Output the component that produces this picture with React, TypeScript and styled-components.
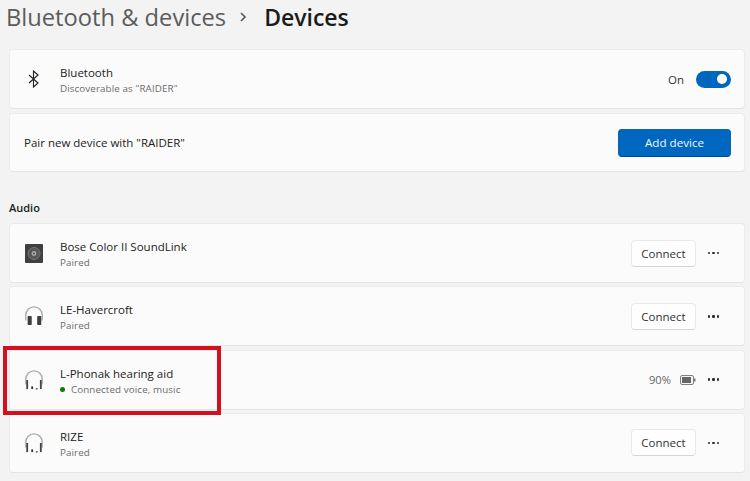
import React from "react";
import styled, { createGlobalStyle } from "styled-components";

const Global = createGlobalStyle`
  html, body { margin: 0; padding: 0; background: #f3f3f3; }
  body { width: 750px; height: 481px; overflow: hidden; font-family: "Open Sans", "Noto Sans", "Liberation Sans", sans-serif; }
`;

const Page = styled.div`
  position: relative;
  width: 750px;
  height: 481px;
  box-sizing: border-box;
  padding: 0 5px 0 9px;
  background: #f3f3f3;
  overflow: hidden;
`;

const Breadcrumb = styled.h1`
  display: flex;
  align-items: center;
  height: 34px;
  margin: 0 0 15px -3px;
  font-size: 23.7px;
  font-weight: 600;
  white-space: nowrap;
`;

const Parent = styled.span`
  color: #5c5c5c;
  font-weight: 500;
`;

const Chevron = styled.svg`
  width: 10px;
  height: 10px;
  margin: 0 16px 0 12px;
  fill: none;
  stroke: #555;
  stroke-width: 1.6;
`;

const Current = styled.span`
  color: #1b1b1b;
  font-size: 23px;
`;

const CardStack = styled.div`
  display: flex;
  flex-direction: column;
  gap: ${(p) => p.$gap}px;
`;

const Card = styled.div`
  display: flex;
  align-items: center;
  height: ${(p) => p.$h ?? 60}px;
  box-sizing: border-box;
  padding: 0 13px 0 15px;
  background: #fbfbfb;
  border: 1px solid #ebebeb;
  border-bottom-color: #e3e3e3;
  border-radius: 4px;
`;

const IconSlot = styled.div`
  display: flex;
  align-items: center;
  justify-content: center;
  width: 20px;
  margin-left: -1px;
  margin-right: 16px;
  flex: none;
`;

const Info = styled.div`
  display: flex;
  flex-direction: column;
  flex: 1;
  min-width: 0;
  padding-top: 3px;
`;

const Title = styled.div`
  font-size: 11.5px;
  line-height: 16px;
  color: #222;
`;

const Sub = styled.div`
  display: flex;
  align-items: center;
  font-size: 9.8px;
  line-height: 15px;
  color: #6b6b6b;
  letter-spacing: 0.1px;
`;

const Dot = styled.span`
  width: 5px;
  height: 5px;
  margin-right: 6px;
  border-radius: 50%;
  background: #0f7b0f;
`;

const PlainLabel = styled.div`
  flex: 1;
  margin-left: -1px;
  font-size: 11.5px;
  color: #222;
`;

const SwitchLabel = styled.span`
  margin-right: 12px;
  font-size: 11.5px;
  color: #333;
`;

const Switch = styled.div`
  display: flex;
  align-items: center;
  justify-content: flex-end;
  width: 35px;
  height: 17px;
  box-sizing: border-box;
  padding-right: 4px;
  border-radius: 9px;
  background: #0067c0;
`;

const Knob = styled.div`
  width: 10px;
  height: 10px;
  border-radius: 50%;
  background: #fff;
`;

const PrimaryButton = styled.button`
  width: 113px;
  height: 28px;
  padding: 0;
  border: 1px solid #0a62b0;
  border-bottom-color: #00498c;
  border-radius: 4px;
  background: #0067c0;
  color: #f2f8fd;
  font: inherit;
  font-size: 11.6px;
`;

const ConnectButton = styled.button`
  width: 65px;
  height: 27px;
  padding: 0;
  border: 1px solid #e9e9e9;
  border-bottom-color: #d6d6d6;
  border-radius: 4px;
  background: #fefefe;
  color: #333;
  font: inherit;
  font-size: 11.5px;
`;

const More = styled.div`
  display: flex;
  gap: 2px;
  width: 11px;
  margin: 0 12px;
  flex: none;
`;

const MoreDot = styled.span`
  width: 2.4px;
  height: 2.4px;
  border-radius: 50%;
  background: #2a2a2a;
`;

const Percent = styled.span`
  margin-right: 9px;
  font-size: 11.2px;
  color: #666;
`;

const Battery = styled.svg`
  flex: none;
`;

const SectionLabel = styled.div`
  height: 16px;
  margin: 28px 0 7px;
  font-size: 11px;
  line-height: 16px;
  font-weight: 600;
  color: #222;
`;

const Highlight = styled.div`
  position: absolute;
  left: 3px;
  top: 346px;
  width: 218px;
  height: 69px;
  box-sizing: border-box;
  border: 4px solid #d4101f;
`;

const BluetoothIcon = () => (
  <svg width="12" height="18" viewBox="0 0 12 18" fill="none" stroke="#222" strokeWidth="1.15">
    <path d="M1 5l9 8-4.5 4V1L10 5 1 13" />
  </svg>
);

const SpeakerIcon = () => (
  <svg width="18" height="19" viewBox="0 0 18 19">
    <rect width="18" height="19" rx="1" fill="#404040" />
    <circle cx="9" cy="9.5" r="6" fill="#585858" stroke="#777" />
    <circle cx="9" cy="9.5" r="2.4" fill="#a8a8a8" />
    <circle cx="9" cy="9.5" r="1" fill="#555" />
  </svg>
);

const HeadphonesIcon = ({ tall }: { tall?: boolean }) => (
  <svg width="22" height="22" viewBox="0 0 22 22" fill="none">
    <path d="M2 16V10a9 9 0 0 1 18 0v6" stroke="#aaa" strokeWidth="1.5" />
    {tall ? (
      <>
        <rect x="4" y="11" width="4.5" height="10" rx="0.8" fill="#3f3f3f" />
        <rect x="14.5" y="11" width="4.5" height="10" rx="0.8" fill="#3f3f3f" />
      </>
    ) : (
      <>
        <rect x="2.5" y="11" width="2" height="10" fill="#444" />
        <rect x="17.5" y="11" width="2" height="10" fill="#444" />
        <rect x="8" y="18" width="2" height="3" fill="#333" />
        <rect x="13" y="20" width="2" height="1.5" fill="#555" />
      </>
    )}
  </svg>
);

const BatteryIcon = () => (
  <Battery width="16" height="10" viewBox="0 0 16 10">
    <rect x="0.5" y="0.5" width="13" height="9" rx="1.5" fill="#f4f4f4" stroke="#808080" />
    <rect x="2" y="2" width="9" height="6" fill="#666" />
    <rect x="14" y="3.5" width="1.5" height="3" fill="#777" />
  </Battery>
);

const Dots = () => (
  <More>
    <MoreDot />
    <MoreDot />
    <MoreDot />
  </More>
);

const Device = ({ icon, name, status, connected }: { icon: React.ReactNode; name: string; status: string; connected?: boolean }) => (
  <Card>
    <IconSlot>{icon}</IconSlot>
    <Info>
      <Title>{name}</Title>
      <Sub>
        {connected && <Dot />}
        {status}
      </Sub>
    </Info>
    {connected ? (
      <>
        <Percent>90%</Percent>
        <BatteryIcon />
      </>
    ) : (
      <ConnectButton>Connect</ConnectButton>
    )}
    <Dots />
  </Card>
);

export default function App() {
  return (
    <Page>
      <Global />
      <Breadcrumb>
        <Parent>Bluetooth &amp; devices</Parent>
        <Chevron viewBox="0 0 10 10">
          <path d="M3 1l4 4-4 4" />
        </Chevron>
        <Current>Devices</Current>
      </Breadcrumb>
      <CardStack $gap={4}>
        <Card>
          <IconSlot>
            <BluetoothIcon />
          </IconSlot>
          <Info>
            <Title>Bluetooth</Title>
            <Sub>Discoverable as "RAIDER"</Sub>
          </Info>
          <SwitchLabel>On</SwitchLabel>
          <Switch>
            <Knob />
          </Switch>
        </Card>
        <Card $h={59}>
          <PlainLabel>Pair new device with "RAIDER"</PlainLabel>
          <PrimaryButton>Add device</PrimaryButton>
        </Card>
      </CardStack>
      <SectionLabel>Audio</SectionLabel>
      <CardStack $gap={3.33}>
        <Device icon={<SpeakerIcon />} name="Bose Color II SoundLink" status="Paired" />
        <Device icon={<HeadphonesIcon tall />} name="LE-Havercroft" status="Paired" />
        <Device icon={<HeadphonesIcon />} name="L-Phonak hearing aid" status="Connected voice, music" connected />
        <Device icon={<HeadphonesIcon />} name="RIZE" status="Paired" />
      </CardStack>
      <Highlight />
    </Page>
  );
}
